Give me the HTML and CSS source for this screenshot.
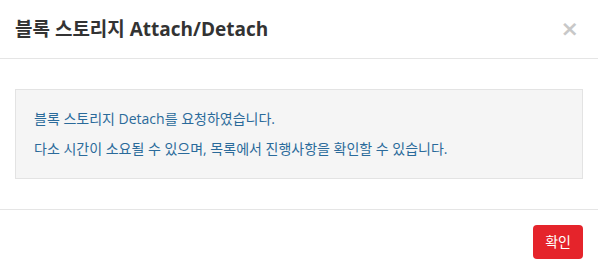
FILE: index.html
```html
<!DOCTYPE html>
<html lang="ko">
<head>
<meta charset="utf-8">
<link rel="stylesheet" href="styles.css">
</head>
<body>
<div class="modal">
  <div class="modal-header">
    <h4 class="modal-title">블록 스토리지 Attach/Detach</h4>
    <button class="close" type="button">×</button>
  </div>
  <div class="modal-body">
    <div class="well">
      <p>블록 스토리지 Detach를 요청하였습니다.</p>
      <p>다소 시간이 소요될 수 있으며, 목록에서 진행사항을 확인할 수 있습니다.</p>
    </div>
  </div>
  <div class="modal-footer">
    <button class="btn" type="button">확인</button>
  </div>
</div>
</body>
</html>
```

FILE: styles.css
```css
html, body {
  margin: 0;
  padding: 0;
  background: #fff;
}
body {
  font-family: "Open Sans", "Noto Sans CJK KR", sans-serif;
  font-size: 14px;
  line-height: 20px;
  color: #333;
}
.modal {
  width: 598px;
  height: 273px;
  background: #fff;
}
.modal-header {
  height: 59px;
  box-sizing: border-box;
  padding: 0 15px;
  border-bottom: 1px solid #e5e5e5;
  display: flex;
  align-items: center;
  justify-content: space-between;
}
.modal-title {
  margin: 0;
  font-size: 19px;
  font-weight: bold;
  line-height: 28px;
  color: #333;
}
.close {
  border: 0;
  background: none;
  padding: 0;
  font-size: 22px;
  font-weight: bold;
  line-height: 1;
  color: #c8c8c8;
  font-family: "DejaVu Sans", sans-serif;
  margin-right: 4px;
}
.modal-body {
  padding: 30px 15px 30px;
}
.well {
  background: #f5f5f5;
  border: 1px solid #e3e3e3;
  padding: 19px 18px 19px;
  color: #2a6a9a;
}
.well p {
  margin: 0;
}
.well p + p {
  margin-top: 10px;
}
.modal-footer {
  border-top: 1px solid #e5e5e5;
  padding: 15px;
  display: flex;
  justify-content: flex-end;
}
.btn {
  border: 0;
  border-radius: 4px;
  background: #e5242b;
  color: #fff;
  font-family: "Open Sans", "Noto Sans CJK KR", sans-serif;
  font-size: 14px;
  line-height: 20px;
  padding: 7px 12px 7px;
}
```
